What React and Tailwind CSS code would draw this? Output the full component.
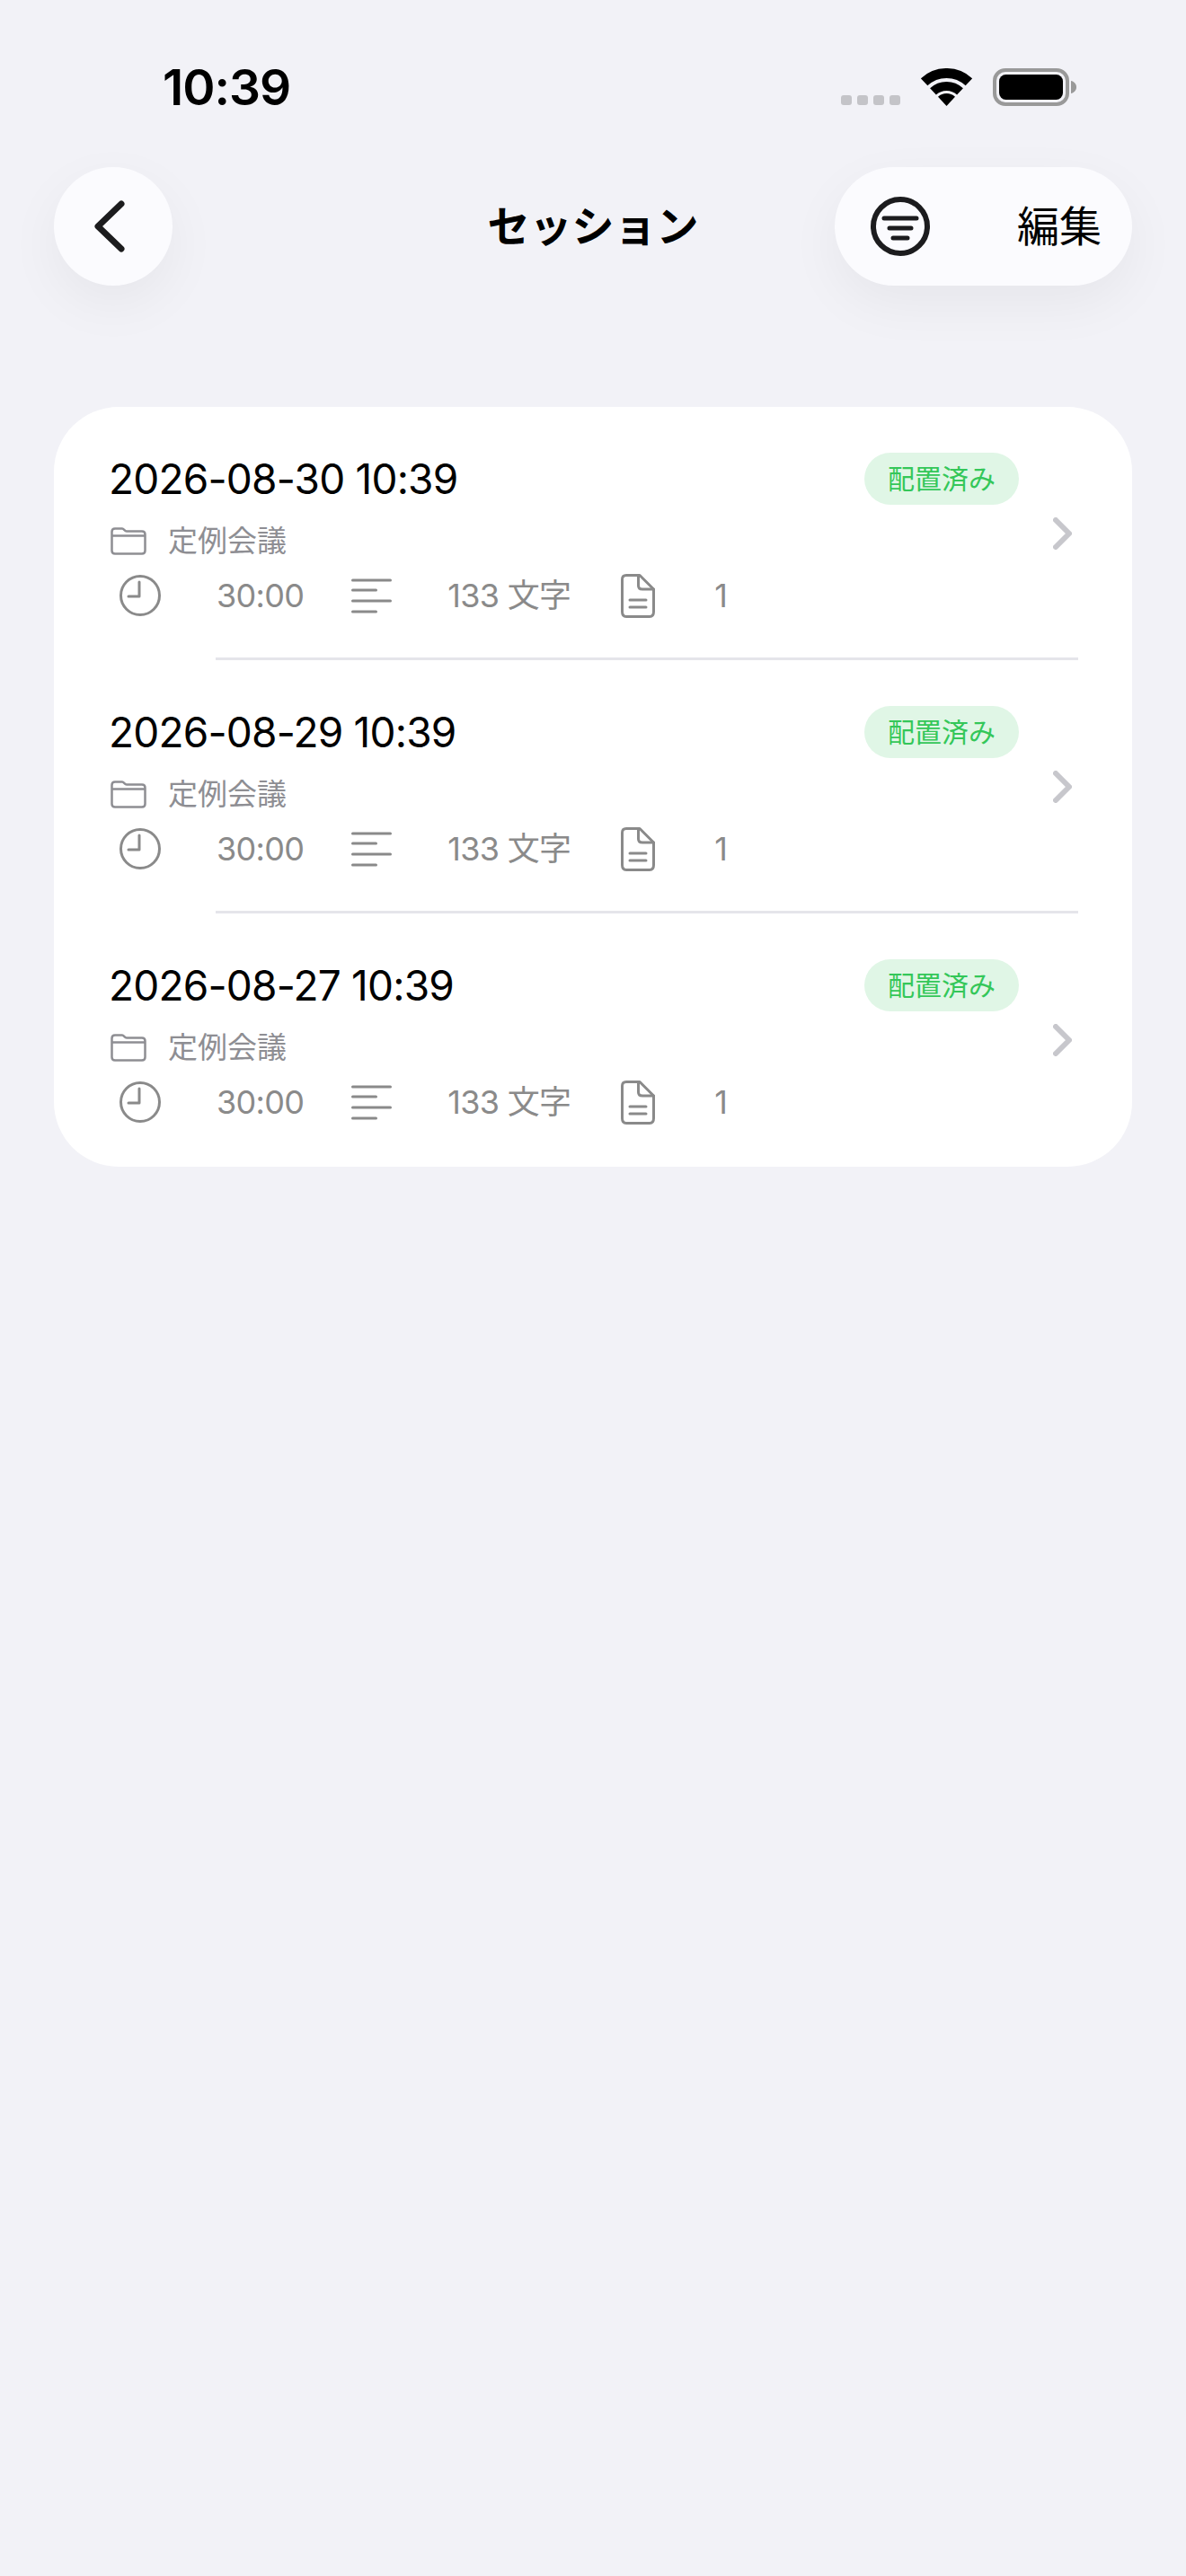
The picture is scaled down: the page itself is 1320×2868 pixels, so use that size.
import React from 'react'

const sessions = [
    { id: 1, date: '2026-08-30 10:39' },
    { id: 2, date: '2026-08-29 10:39' },
    { id: 3, date: '2026-08-27 10:39' },
]

const FONT = "font-['Inter','Noto_Sans_CJK_JP',sans-serif]"

function WifiIcon() {
    return (
        <svg width="57" height="42" viewBox="0 0 57 42" fill="none">
            <path d="M3.6 15.3A36.5 36.5 0 0 1 53.4 15.3" stroke="#000" strokeWidth="11" />
            <path d="M13.5 25.9A22 22 0 0 1 43.5 25.9" stroke="#000" strokeWidth="10" />
            <path d="M28.5 42L19 31.8A14 14 0 0 1 38 31.8Z" fill="#000" />
        </svg>
    )
}

function BatteryIcon() {
    return (
        <svg width="93" height="42" viewBox="0 0 93 42" fill="none">
            <rect x="2" y="2" width="81" height="38" rx="12" stroke="#999" strokeWidth="4" />
            <rect x="7" y="7" width="71" height="28" rx="7.5" fill="#000" />
            <path d="M87 14C90 14.5 93 17 93 21C93 25 90 27.5 87 28Z" fill="#999" />
        </svg>
    )
}

function BackIcon() {
    return (
        <svg width="36" height="58" viewBox="0 0 36 58" fill="none">
            <path d="M31 4L5 29L31 54" stroke="#1c1c1e" strokeWidth="7" strokeLinecap="round" strokeLinejoin="round" />
        </svg>
    )
}

function FilterIcon() {
    return (
        <svg width="66" height="66" viewBox="0 0 66 66" fill="none" stroke="#1c1c1e" strokeLinecap="round">
            <circle cx="33" cy="33" r="30" strokeWidth="6" />
            <path d="M15 24H51M21 35H45M25 46H41" strokeWidth="5" />
        </svg>
    )
}

function FolderIcon() {
    return (
        <svg width="40" height="31" viewBox="0 0 40 31" fill="none" stroke="#8e8e93" strokeWidth="2.5" strokeLinejoin="round">
            <path d="M1.5 5C1.5 2.8 2.8 1.5 5 1.5H13C15 1.5 15.5 4.5 18 4.5H35C37.2 4.5 38.5 5.8 38.5 8V26C38.5 28.2 37.2 29.5 35 29.5H5C2.8 29.5 1.5 28.2 1.5 26Z" />
            <path d="M1.5 9.5H38.5" />
        </svg>
    )
}

function ClockIcon() {
    return (
        <svg width="46" height="46" viewBox="0 0 46 46" fill="none" stroke="#8a8a8a" strokeWidth="3" strokeLinecap="round" strokeLinejoin="round">
            <circle cx="23" cy="23" r="21.5" />
            <path d="M22 8V24H10" />
        </svg>
    )
}

function LinesIcon() {
    return (
        <svg width="45" height="39" viewBox="0 0 45 39" fill="none" stroke="#8a8a8a" strokeWidth="3" strokeLinecap="round">
            <path d="M1.5 2H43.5M1.5 13H27.5M1.5 25H43.5M1.5 37H27.5" />
        </svg>
    )
}

function DocIcon() {
    return (
        <svg width="38" height="49" viewBox="0 0 38 49" fill="none" stroke="#8a8a8a" strokeWidth="3" strokeLinecap="round" strokeLinejoin="round">
            <path d="M6 1.5H21L36.5 17V42C36.5 45.5 35 47.5 32 47.5H6C3 47.5 1.5 45.5 1.5 42V6C1.5 3 3 1.5 6 1.5Z" />
            <path d="M19.5 1.5V13C19.5 16 21 17 24 17H36.5" />
            <path d="M10 29H28M10 37H28" />
        </svg>
    )
}

function ChevronIcon() {
    return (
        <svg width="21" height="36" viewBox="0 0 21 36" fill="none">
            <path d="M3 3L18 18L3 33" stroke="#c7c7cc" strokeWidth="6" strokeLinecap="round" strokeLinejoin="round" />
        </svg>
    )
}

// icon sits centred in a fixed box, the text follows it
function MetaItem({ icon, label, className }) {
    return (
        <div className={`flex items-center ${className || ''}`}>
            <div className="w-[66px] h-[50px] flex items-center justify-center">{icon}</div>
            <span className="ml-[52px] text-[36px] leading-[48px] tracking-[-0.7px] text-[#8a8a8a] whitespace-nowrap">{label}</span>
        </div>
    )
}

function SessionRow({ session, last }) {
    return (
        <div>
            <div className="h-[279px] flex items-center pl-[63px]">
                <div className="w-[1011px] self-stretch pt-[51px]">
                    <div className="flex items-center justify-between h-[58px]">
                        <span className="-ml-[2px] text-[46px] leading-[58px] tracking-[-0.8px] text-black whitespace-nowrap">{session.date}</span>
                        <span className="w-[172px] h-[58px] rounded-full bg-[#e0f6e6] text-[#34c759] text-[30px] flex items-center justify-center whitespace-nowrap">配置済み</span>
                    </div>
                    <div className="mt-[23px] h-[34px] flex items-center">
                        <FolderIcon />
                        <span className="ml-[24px] text-[33px] leading-[34px] text-[#8e8e93]">定例会議</span>
                    </div>
                    <div className="mt-[19px] flex items-center">
                        <MetaItem icon={<ClockIcon />} label="30:00" />
                        <MetaItem icon={<LinesIcon />} label="133 文字" className="ml-[42px]" />
                        <MetaItem icon={<DocIcon />} label="1" className="ml-[42px]" />
                    </div>
                </div>
                <div className="ml-[38px] mt-[3px]">
                    <ChevronIcon />
                </div>
            </div>
            <div className={`ml-[180px] mr-[60px] h-[3px] ${last ? 'bg-transparent' : 'bg-[#e5e5ea]'}`} />
        </div>
    )
}

export default function App() {
    return (
        <div className={`w-[1320px] min-h-[2868px] bg-[#f2f2f7] ${FONT}`}>
            {/* status bar */}
            <div className="pt-[70px] h-[186px] pl-[181px] pr-[122px]">
                <div className="flex items-center justify-between h-[54px]">
                    <span className="text-[55px] leading-[54px] font-semibold text-black tracking-[-1px]">10:39</span>
                    <div className="flex items-end gap-[23px]">
                        <div className="flex gap-[6px] mb-[1px]">
                            {[0, 1, 2, 3].map(i => (
                                <div key={i} className="w-[12px] h-[11px] rounded-[3px] bg-[#c4c4c8]" />
                            ))}
                        </div>
                        <WifiIcon />
                        <BatteryIcon />
                    </div>
                </div>
            </div>

            {/* nav */}
            <div className="px-[60px] grid grid-cols-[1fr_auto_1fr] items-center">
                <button className="w-[132px] h-[132px] rounded-full bg-[#fbfbfe] shadow-[0_20px_60px_rgba(0,0,0,0.05)] flex items-center justify-center pr-[8px]">
                    <BackIcon />
                </button>
                <h1 className="text-[47px] font-semibold text-black">セッション</h1>
                <div className="justify-self-end w-[331px] h-[132px] rounded-full bg-[#fbfbfe] shadow-[0_20px_60px_rgba(0,0,0,0.05)] flex items-center justify-between pl-[40px] pr-[34px]">
                    <FilterIcon />
                    <span className="text-[47px] text-black">編集</span>
                </div>
            </div>

            {/* list */}
            <div className="mt-[135px] mx-[60px] bg-white rounded-[72px]">
                {sessions.map((s, i) => (
                    <SessionRow key={s.id} session={s} last={i === sessions.length - 1} />
                ))}
            </div>
        </div>
    )
}
